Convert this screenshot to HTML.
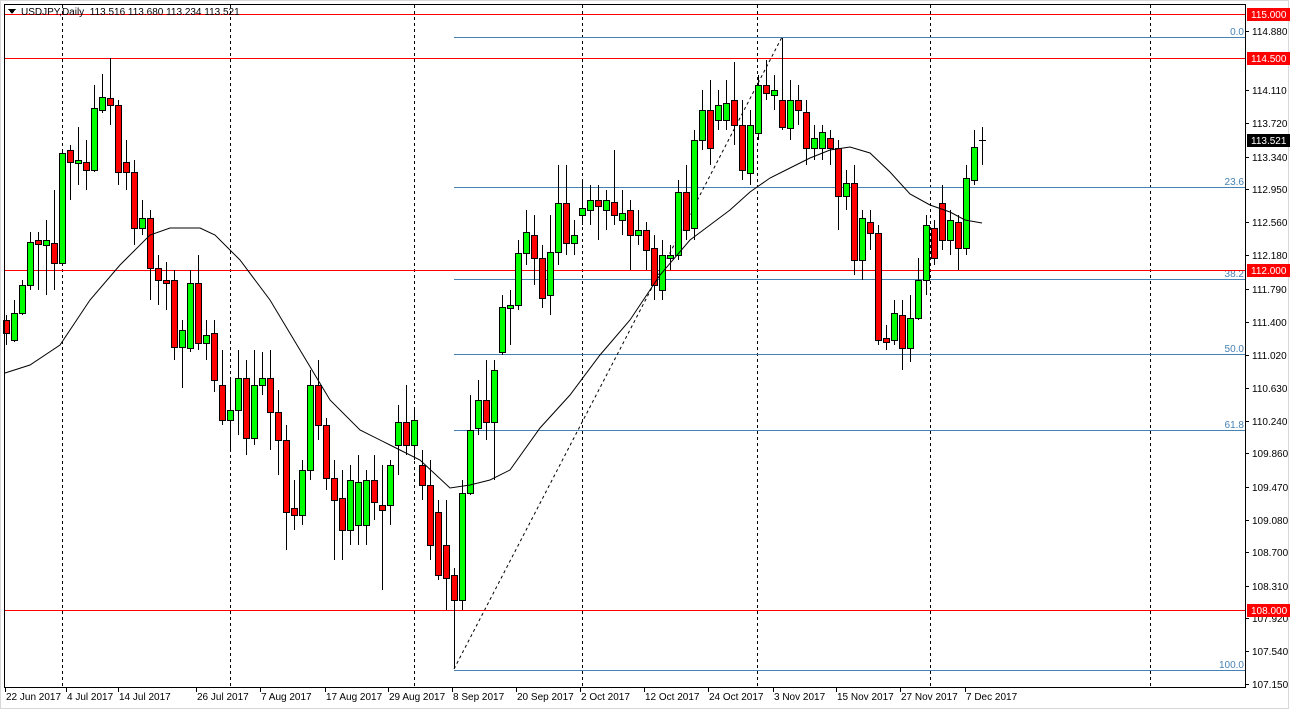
<!DOCTYPE html>
<html><head><meta charset="utf-8"><style>
html,body{margin:0;padding:0;background:#fff;width:1290px;height:710px;overflow:hidden}
svg{display:block;font-family:"Liberation Sans",sans-serif;font-size:10px}
</style></head><body>
<svg id="s" width="1290" height="710" xmlns="http://www.w3.org/2000/svg" shape-rendering="crispEdges">
<rect x="0" y="0" width="1290" height="710" fill="#fff"/>
<rect x="0.5" y="0.5" width="1288" height="708" fill="none" stroke="#d8d8d8"/>
<g id="grid" stroke="#000" stroke-dasharray="3,3">
<line x1="62.5" y1="5" x2="62.5" y2="687"/><line x1="230.5" y1="5" x2="230.5" y2="687"/>
<line x1="414.5" y1="5" x2="414.5" y2="687"/><line x1="582.5" y1="5" x2="582.5" y2="687"/>
<line x1="757.5" y1="5" x2="757.5" y2="687"/><line x1="930.5" y1="5" x2="930.5" y2="687"/>
<line x1="1150.5" y1="5" x2="1150.5" y2="687"/>
</g>
<g stroke="#4682b4">
<line x1="454" y1="37.5" x2="1245" y2="37.5"/><line x1="454" y1="187.5" x2="1245" y2="187.5"/>
<line x1="454" y1="279.5" x2="1245" y2="279.5"/><line x1="454" y1="354.5" x2="1245" y2="354.5"/>
<line x1="454" y1="430.5" x2="1245" y2="430.5"/><line x1="454" y1="670.5" x2="1245" y2="670.5"/>
</g>
<g fill="#4682b4" text-anchor="end" font-size="10">
<text x="1244" y="35">0.0</text><text x="1244" y="185">23.6</text><text x="1244" y="277">38.2</text>
<text x="1244" y="352">50.0</text><text x="1244" y="428">61.8</text><text x="1244" y="668">100.0</text>
</g>
<line x1="454" y1="669" x2="782" y2="37" stroke="#000" stroke-dasharray="3,3" shape-rendering="auto"/>
<g stroke="#f00">
<line x1="5" y1="14.5" x2="1245" y2="14.5"/><line x1="5" y1="58.5" x2="1245" y2="58.5"/>
<line x1="5" y1="270.5" x2="1245" y2="270.5"/><line x1="5" y1="610.5" x2="1245" y2="610.5"/>
</g>
<g id="c"></g>
<polyline fill="none" stroke="#000" shape-rendering="auto" points="5,373 30,365 60,345 90,300 120,265 150,235 170,228 200,228 215,235 240,260 270,300 300,350 330,400 360,430 390,445 420,460 450,488 470,485 490,480 510,470 540,428 570,395 600,355 630,320 660,275 690,240 710,225 730,210 750,192 770,178 790,168 810,158 830,150 850,147 870,153 890,172 910,194 930,205 950,212 965,220 982,223"/>
<rect x="4.5" y="4.5" width="1241" height="683" fill="none" stroke="#000"/>
<g id="ax" font-size="10" fill="#000"></g>
<text x="21" y="15" font-size="10">USDJPY,Daily&#160;&#160;113.516 113.680 113.234 113.521</text>
<path d="M8 9 L16 9 L12 14 Z" fill="#000"/>
</svg>
<script>
var c=document.getElementById('c'),ns='http://www.w3.org/2000/svg';
function el(t,a,p){var e=document.createElementNS(ns,t);for(var k in a)e.setAttribute(k,a[k]);(p||c).appendChild(e);return e;}
var d=[
['R',320,333,315,345],['G',313,340,300,342],['G',285,313,280,315],['G',242,285,232,290],['R',240,244,232,290],['G',240,245,220,295],['R',243,263,190,290],['G',153,263,150,266],['R',150,162,145,200],['G',160,163,127,185],['R',162,170,140,190],['G',108,170,85,172],['G',97,110,74,113],['R',98,105,58,125],['R',105,172,100,185],['R',162,172,140,190],['R',172,228,160,245],['G',218,228,200,235],['R',218,268,210,300],['R',268,280,255,305],['R',280,283,262,310],['R',280,347,270,360],['G',330,347,320,388],['G',283,348,270,352],['R',283,343,255,350],['G',335,343,320,360],['R',333,380,320,392],['R',385,420,350,425],['G',410,420,380,450],['G',378,410,350,435],['R',378,438,360,455],['G',385,438,350,445],['G',378,385,352,395],['R',378,412,350,450],['R',412,440,390,475],['R',440,512,425,550],['R',508,515,480,530],['G',470,515,460,525],['G',385,470,370,480],['R',385,425,360,440],['R',425,478,418,490],['R',478,500,460,560],['R',498,530,470,560],['G',480,530,465,545],['G',482,525,455,545],['G',480,525,470,545],['R',480,502,455,520],['R',505,510,465,590],['G',465,505,460,525],['G',422,445,405,475],['R',422,445,385,455],['G',420,445,410,460],['R',465,485,450,500],['R',485,545,460,560],['R',512,575,500,580],['R',545,578,500,610],['R',575,600,568,668],['G',493,600,480,610],['G',430,493,395,495],['G',400,428,380,435],['R',400,422,360,440],['G',370,422,360,480],['G',307,352,295,355],['G',305,308,290,345],['G',253,305,240,310],['G',232,253,210,265],['R',235,258,215,285],['R',258,298,245,308],['G',252,295,215,315],['G',203,252,165,265],['R',203,243,165,255],['G',235,243,220,255],['G',208,215,180,225],['G',200,210,185,225],['R',200,206,185,240],['G',200,210,190,230],['R',202,215,150,225],['G',213,220,190,235],['R',210,235,200,270],['G',230,235,210,245],['R',230,250,222,270],['R',248,285,235,300],['G',255,290,240,300],['G',255,258,245,270],['G',192,255,180,260],['R',192,230,165,240],['G',140,228,130,240],['G',110,140,90,150],['R',110,148,80,165],['G',105,120,90,130],['G',103,120,80,130],['R',100,125,62,145],['R',125,170,100,180],['G',125,173,110,185],['G',85,133,75,140],['R',85,93,60,100],['G',90,95,75,110],['R',100,127,38,130],['G',100,128,80,140],['R',100,110,85,125],['R',112,148,100,165],['G',138,148,125,160],['G',132,148,125,160],['R',138,148,130,165],['R',148,196,140,230],['G',183,196,170,210],['R',183,260,165,275],['G',218,260,210,280],['R',222,233,210,250],['R',233,340,225,345],['R',338,342,325,350],['G',313,340,300,345],['R',315,348,300,370],['G',318,348,295,362],['G',280,318,258,320],['G',225,280,215,295],['R',228,258,220,265],['R',203,240,185,250],['G',220,240,210,255],['R',222,248,215,270],['G',178,248,165,255],['G',147,180,130,185],['D',140,141,127,165]];
d.forEach(function(k,i){var x=6+i*8;
el('line',{x1:x+.5,x2:x+.5,y1:k[3],y2:k[4],stroke:'#000'});
if(k[0]=='D'){el('line',{x1:x-3,x2:x+4,y1:k[1]+.5,y2:k[1]+.5,stroke:'#000'});return;}
el('rect',{x:x-2.5,y:k[1]+.5,width:6,height:Math.max(1,k[2]-k[1]),fill:k[0]=='G'?'#00ff00':'#ff0000',stroke:'#000'});});
var ax=document.getElementById('ax');
var pl=[['114.880',31],['114.110',90],['113.720',123],['113.340',157],['112.950',189],['112.560',222],['112.180',255],['111.790',289],['111.400',322],['111.020',355],['110.630',388],['110.240',421],['109.860',453],['109.470',487],['109.080',520],['108.700',552],['108.310',586],['107.920',618],['107.540',651],['107.150',684]];
pl.forEach(function(p){el('line',{x1:1245,x2:1249,y1:p[1]+.5,y2:p[1]+.5,stroke:'#000'},ax);var t=el('text',{x:1252,y:p[1]+4},ax);t.textContent=p[0];});
[['115.000',14,'#f00'],['114.500',58,'#f00'],['112.000',270,'#f00'],['108.000',610,'#f00'],['113.521',140,'#000']].forEach(function(p){el('rect',{x:1247,y:p[1]-6,width:43,height:13,fill:p[2]},ax);var t=el('text',{x:1251,y:p[1]+4,fill:'#fff'},ax);t.textContent=p[0];});
[['22 Jun 2017',5],['4 Jul 2017',66],['14 Jul 2017',118],['26 Jul 2017',196],['7 Aug 2017',260],['17 Aug 2017',325],['29 Aug 2017',388],['8 Sep 2017',452],['20 Sep 2017',516],['2 Oct 2017',580],['12 Oct 2017',644],['24 Oct 2017',708],['3 Nov 2017',773],['15 Nov 2017',836],['27 Nov 2017',900],['7 Dec 2017',965]].forEach(function(p){el('line',{x1:p[1]+.5,x2:p[1]+.5,y1:687,y2:692,stroke:'#000'},ax);var t=el('text',{x:p[1]+1,y:700},ax);t.textContent=p[0];});
</script>
</body></html>
